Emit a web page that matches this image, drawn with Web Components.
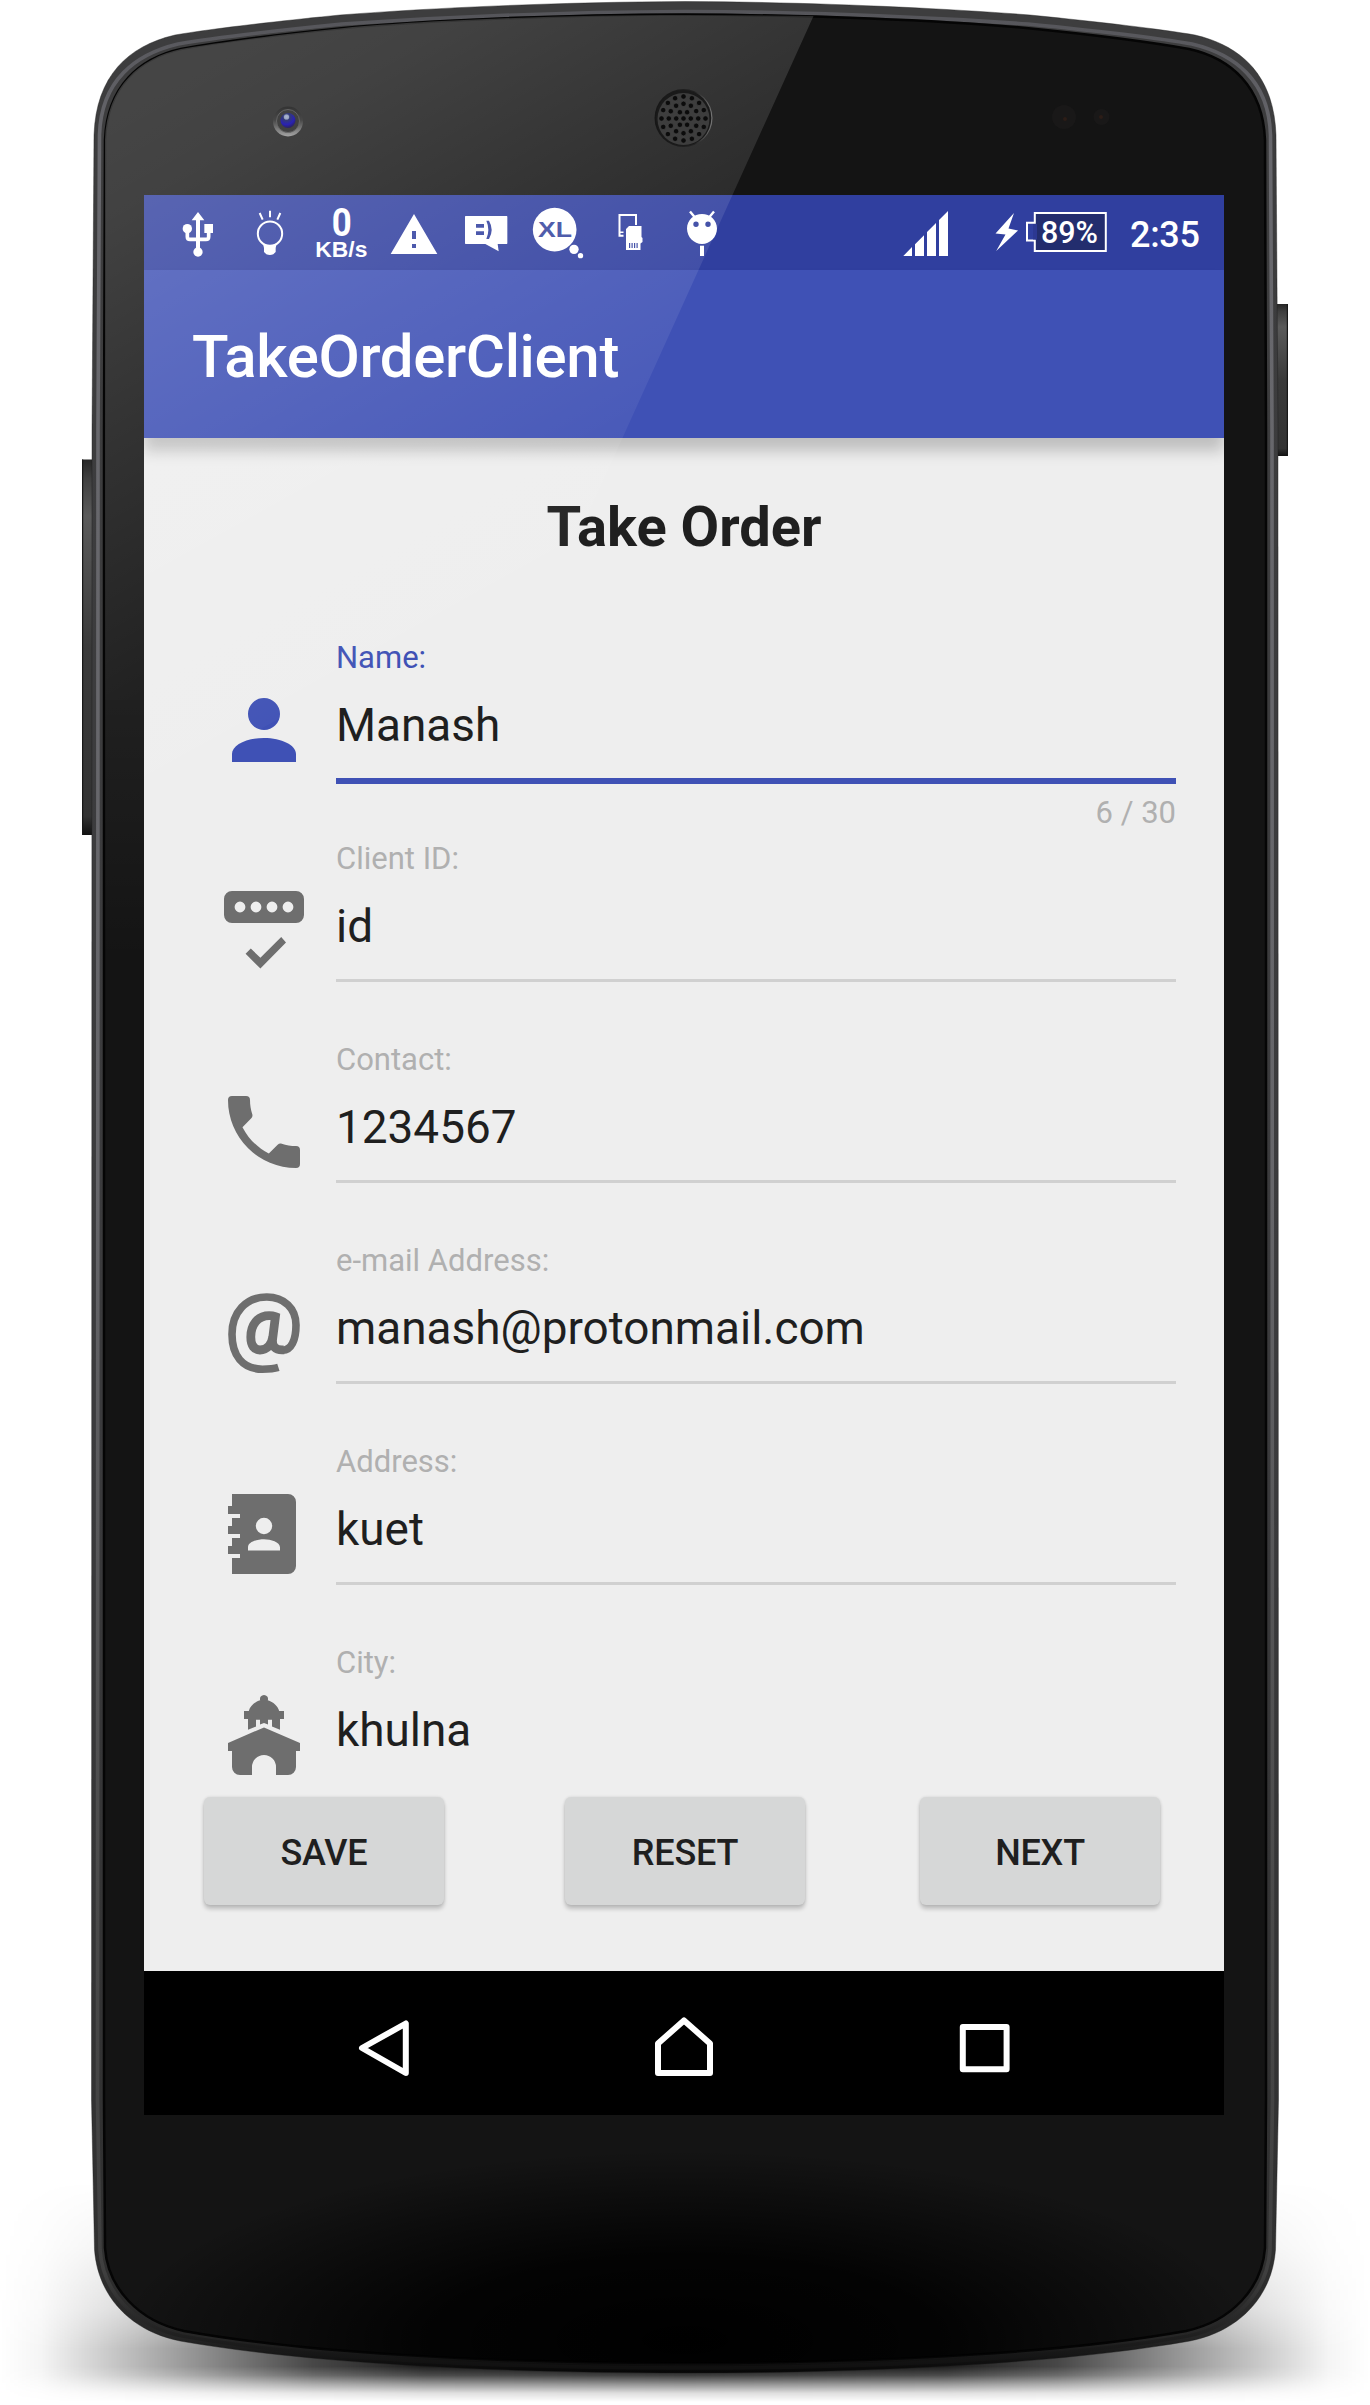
<!DOCTYPE html>
<html lang="en">
<head>
<meta charset="utf-8">
<title>TakeOrderClient</title>
<style>
html,body{margin:0;padding:0;background:#fff}
body{width:1370px;height:2405px;overflow:hidden;font-family:Roboto,"Noto Sans",sans-serif}
</style>
</head>
<body>
<phone-mockup>
  <status-bar></status-bar>
  <app-bar>TakeOrderClient</app-bar>
  <order-form heading="Take Order">
    <form-field icon="person" label="Name:" value="Manash" counter="6 / 30" active></form-field>
    <form-field icon="password" label="Client ID:" value="id"></form-field>
    <form-field icon="phone" label="Contact:" value="1234567"></form-field>
    <form-field icon="at" label="e-mail Address:" value="manash@protonmail.com"></form-field>
    <form-field icon="book" label="Address:" value="kuet"></form-field>
    <form-field icon="city" label="City:" value="khulna"></form-field>
    <raised-button slot="actions">SAVE</raised-button>
    <raised-button slot="actions" style="margin-left:121px">RESET</raised-button>
    <raised-button slot="actions" style="margin-left:115px">NEXT</raised-button>
  </order-form>
  <nav-bar></nav-bar>
</phone-mockup>
<script>
const define = (name, html) => customElements.define(name, class extends HTMLElement {
  constructor() {
    super();
    this.attachShadow({ mode: 'open' });
  }
  connectedCallback() {
    this.shadowRoot.innerHTML = typeof html === 'function' ? html(this) : html;
  }
});

/* Earpiece: concentric rings of holes */
const holes = [[1, 0], [6, 7.3], [12, 14.7], [16, 22]].map(([n, r]) =>
  Array.from({ length: n }, (_, i) => {
    const a = i * 2 * Math.PI / n;
    return `<circle cx="${(683.5 + r * Math.cos(a)).toFixed(1)}" cy="${(118.5 + r * Math.sin(a)).toFixed(1)}" r="2.7"/>`;
  }).join('')).join('');

const outer = 'M685 1.5C560 2 430 8 340 15C270 22 210 29 175 35C128 46 96 76 94 135L92 430L91.5 2100L94.5 2250C98 2296 130 2331 180 2341C300 2362 480 2373 685 2373C890 2373 1070 2362 1190 2341C1240 2331 1272 2296 1275.5 2250L1278.500 2100L1278 430L1276 135C1274 76 1242 46 1195 35C1160 29 1100 22 1030 15C940 8 810 2 685 1.500Z';
const ridge = 'M685 11.500C560 12 430 18 342 24C272 31 212 38 178 44C136 54 101 80 99.500 135L98 430L97.500 2100L100 2250C103 2292 134 2326 182 2336C300 2357 480 2368 685 2368C890 2368 1070 2357 1188 2336C1236 2326 1267 2292 1270 2250L1272.500 2100L1272 430L1270.500 135C1269 80 1234 54 1192 44C1158 38 1098 31 1028 24C940 18 810 12 685 11.500Z';
const face = 'M685 14.500C560 15 430 20 344 28C274 35 214 43 181 49C140 58 107 86 105 140L104 430L104 2100L105 2248C108 2288 138 2321 184 2331C300 2352 480 2363 685 2363C890 2363 1070 2352 1186 2331C1232 2321 1262 2288 1265 2248L1266 2100L1266 430L1265 140C1263 86 1230 58 1189 49C1156 43 1096 35 1026 28C940 20 810 15 685 14.500Z';

define('phone-mockup', `
<style>
:host{display:grid;width:1370px;height:2405px}
svg,.screen{grid-area:1/1}
.screen{display:flex;flex-direction:column;width:1080px;height:1920px;margin:195px 0 0 144px;overflow:hidden;z-index:1}
.sheen{z-index:2;pointer-events:none}
</style>
<svg width="1370" height="2405" viewBox="0 0 1370 2405">
  <defs>
    <linearGradient id="sh"><stop offset="0" stop-opacity="0"/><stop offset=".03" stop-opacity=".04"/><stop offset=".065" stop-opacity=".16"/><stop offset=".13" stop-opacity=".38"/><stop offset=".228" stop-opacity=".72"/><stop offset=".31" stop-opacity=".88"/><stop offset=".5" stop-opacity=".95"/><stop offset=".69" stop-opacity=".88"/><stop offset=".772" stop-opacity=".72"/><stop offset=".87" stop-opacity=".38"/><stop offset=".935" stop-opacity=".16"/><stop offset=".97" stop-opacity=".04"/><stop offset="1" stop-opacity="0"/></linearGradient>
    <linearGradient id="sv" gradientUnits="userSpaceOnUse" x1="0" y1="2180" x2="0" y2="2402"><stop offset="0" stop-color="#fff" stop-opacity="0"/><stop offset=".3" stop-color="#fff" stop-opacity=".2"/><stop offset=".58" stop-color="#fff" stop-opacity=".55"/><stop offset=".76" stop-color="#fff"/><stop offset=".84" stop-color="#fff"/><stop offset=".88" stop-color="#fff" stop-opacity=".8"/><stop offset=".92" stop-color="#fff" stop-opacity=".45"/><stop offset=".96" stop-color="#fff" stop-opacity=".14"/><stop offset="1" stop-color="#fff" stop-opacity="0"/></linearGradient>
    <mask id="sm"><rect y="2180" width="1370" height="222" fill="url(#sv)"/></mask>
    <linearGradient id="rim" x2="0" y2="1"><stop offset="0" stop-color="#3d3d3e"/><stop offset=".6" stop-color="#3b3b3d"/><stop offset=".95" stop-color="#303030"/><stop offset=".985" stop-color="#262626"/><stop offset="1" stop-color="#060606"/></linearGradient>
    <linearGradient id="hl" x2="0" y2="1"><stop offset="0" stop-color="#55555a"/><stop offset=".06" stop-color="#68686d"/><stop offset=".5" stop-color="#66666a"/><stop offset=".8" stop-color="#4a4a4a"/><stop offset=".96" stop-color="#3f3f3f"/><stop offset="1" stop-color="#101010"/></linearGradient>
    <radialGradient id="dk" gradientUnits="userSpaceOnUse" cx="0" cy="0" r="1" gradientTransform="translate(685 2340) scale(570 190)"><stop offset="0" stop-color="#000"/><stop offset=".45" stop-color="#000" stop-opacity=".85"/><stop offset="1" stop-color="#000" stop-opacity="0"/></radialGradient>
    <linearGradient id="bt" x2="0" y2="1"><stop offset="0" stop-color="#262626"/><stop offset=".05" stop-color="#3f3f3f"/><stop offset=".15" stop-color="#5a5a5a"/><stop offset=".35" stop-color="#484848"/><stop offset=".5" stop-color="#3a3a3a"/><stop offset=".95" stop-color="#333"/><stop offset="1" stop-color="#111"/></linearGradient>
  </defs>
  <rect y="2180" width="1370" height="222" fill="url(#sh)" mask="url(#sm)"/>
  <rect x="82" y="459.500" width="12" height="375.500" fill="url(#bt)"/><rect x="82" y="459.500" width="1.200" height="375.500" fill="#181818"/>
  <rect x="1276" y="304" width="12" height="152" fill="url(#bt)"/><rect x="1286.800" y="304" width="1.200" height="152" fill="#181818"/>
  <path d="${outer}" fill="url(#rim)"/>
  <path d="${outer}" fill="none" stroke="#1c1c1c" stroke-opacity=".4"/>
  <path d="${ridge}" fill="none" stroke="url(#hl)" stroke-width="3.600"/>
  <path d="${face}" fill="#141414" stroke="#050505" stroke-width="2.500"/>
  <path d="${face}" fill="url(#dk)"/>
  <circle cx="1064" cy="117" r="12" fill="#191818"/><circle cx="1065" cy="119" r="2" fill="#2c1d17"/>
  <circle cx="1101.500" cy="117" r="8" fill="#191818"/><circle cx="1101" cy="117" r="2" fill="#2c1d17"/>
</svg>
<div class="screen"><slot></slot></div>
<svg class="sheen" width="1370" height="2405" viewBox="0 0 1370 2405">
  <defs>
    <linearGradient id="gl" gradientUnits="userSpaceOnUse" x1="73" y1="131" x2="369" y2="665"><stop offset="0" stop-color="#fff" stop-opacity=".21"/><stop offset=".15" stop-color="#fff" stop-opacity=".195"/><stop offset=".5" stop-color="#fff" stop-opacity=".125"/><stop offset=".87" stop-color="#fff" stop-opacity=".055"/><stop offset="1" stop-color="#fff" stop-opacity=".025"/></linearGradient>
    <linearGradient id="edge" gradientUnits="userSpaceOnUse" x1="0" y1="700" x2="0" y2="960"><stop offset="0" stop-color="#fff" stop-opacity=".052"/><stop offset="1" stop-color="#fff" stop-opacity="0"/></linearGradient>
    <linearGradient id="cam" x2="0" y2="1"><stop offset="0" stop-color="#333"/><stop offset=".45" stop-color="#484848"/><stop offset="1" stop-color="#a5a5a5"/></linearGradient>
    <linearGradient id="sp"><stop offset="0" stop-color="#161616"/><stop offset=".7" stop-color="#222"/><stop offset="1" stop-color="#777"/></linearGradient>
    <radialGradient id="lens" cx=".4" cy=".25" r=".8"><stop offset="0" stop-color="#8a9ac0"/><stop offset=".3" stop-color="#333a78"/><stop offset=".65" stop-color="#2a22b4"/><stop offset="1" stop-color="#2b2350"/></radialGradient>
  </defs>
  <path d="M144 700H105V140C107 86 140 58 181 49C214 43 274 35 344 28C430 20 560 15 685 15L813.500 16L574 545Q566 562 540 574Q500 595 457 620L190 768L144 793Z" fill="url(#gl)"/>
  <path d="M105 700H144V960H105Z" fill="url(#edge)"/>
  <circle cx="288" cy="121.500" r="15" fill="url(#cam)"/><circle cx="288" cy="121" r="11.500" fill="#414141" stroke="#6d6d6d" stroke-width=".8"/><circle cx="288" cy="120.500" r="7.500" fill="url(#lens)"/>
  <circle cx="286.500" cy="117" r="2.600" fill="#b9c3d6" fill-opacity=".7"/>
  <circle cx="683.500" cy="118" r="29" fill="url(#sp)"/><circle cx="683.500" cy="118" r="27.800" fill="#1a1a1a"/><circle cx="683.500" cy="119" r="26" fill="#3d3d3d"/>
  <g fill="#0b0b0b" stroke="#4d4d4d" stroke-width=".6">${holes}</g>
</svg>`);

define('status-bar', `
<style>
:host{display:flex;align-items:center;height:75px;flex:none;background:#303f9f;padding-left:18px;color:#fff}
svg{display:block;flex:none;fill:#fff;overflow:visible}
.space{flex:1}
.time{font-size:36px;line-height:44px;font-weight:500;width:70px;margin:5px 24px 0 22px;letter-spacing:-.3px;white-space:nowrap}
</style>
<svg width="72" height="75" viewBox="66 15 216 225"><path d="M174 66L193 91H180V176H168V91H155Z"/><circle cx="174" cy="186" r="14"/><circle cx="142" cy="116" r="14"/><path d="M193 102H219V129H193Z"/><path d="M142 118V140Q142 148 150 148H198Q206 148 206 140V122" fill="none" stroke="#fff" stroke-width="11"/></svg>
<svg width="72" height="75" viewBox="282 15 216 225"><circle cx="390" cy="131" r="36.500" fill="none" stroke="#fff" stroke-width="6"/><path d="M366 158Q390 174 413 158Q407 166 407 174V186L400 193Q390 197 379 193L372 186V174Q372 166 366 158Z"/><path d="M390 62V82M359 69L368 89M421 69L412 89" fill="none" stroke="#fff" stroke-width="6"/></svg>
<svg width="72" height="75" viewBox="498 15 216 225"><text x="575" y="138" font-family="Roboto" font-weight="700" font-size="118" textLength="60" lengthAdjust="spacingAndGlyphs">0</text><text x="526" y="202" font-family="Liberation Sans" font-weight="700" font-size="65" textLength="156" lengthAdjust="spacingAndGlyphs">KB/s</text></svg>
<svg width="72" height="75" viewBox="714 15 216 225"><path fill-rule="evenodd" d="M822 72L892 192H752ZM816 123V147H828V123ZM816 162V174H828V162Z"/></svg>
<svg width="72" height="75" viewBox="930 15 216 225"><path fill-rule="evenodd" d="M977 78H1100Q1102 78 1102 80V160Q1102 162 1100 162H1073L1076 184L1036 162H977Q975 162 975 160V80Q975 78 977 78ZM1008 102V113H1032V102ZM1008 124V135H1032V124ZM1039 92Q1051 119 1039 147H1047Q1063 119 1047 92Z"/></svg>
<svg width="72" height="75" viewBox="1146 15 216 225"><circle cx="1244" cy="119" r="65.500"/><circle cx="1302" cy="178" r="14"/><circle cx="1321.500" cy="197" r="8"/><text x="1194" y="142" fill="#3847a0" font-family="Liberation Sans" font-weight="700" font-size="67" textLength="102" lengthAdjust="spacingAndGlyphs">XL</text></svg>
<svg width="72" height="75" viewBox="594 195 72 75"><path d="M623.500 235.700H619.500V215H636V225" fill="none" stroke="#fff" stroke-width="2"/><path d="M619 231.500H623.500V233H619Z"/><path fill-rule="evenodd" d="M629 226H641.500V237L642.500 238V242L640.500 243.500V250H626V229ZM629 243V248H630.200V243ZM631.500 243V248H632.700V243ZM634 243V248H635.200V243ZM636.500 243V248H637.700V243Z"/></svg>
<svg width="72" height="75" viewBox="666 195 72 75"><path fill-rule="evenodd" d="M702 214C710 214 717 220 717 228.500C717 237 710 244 702 244C694 244 687 237 687 228.500C687 220 694 214 702 214ZM698.700 224.300A2.700 2.700 0 1 0 693.300 224.300A2.700 2.700 0 1 0 698.700 224.300ZM710.700 224.300A2.700 2.700 0 1 0 705.300 224.300A2.700 2.700 0 1 0 710.700 224.300Z"/><path d="M700 245.700H704V256H700Z"/><path d="M690 211.500L695 217.500M714 211.500L709 217.500" stroke="#fff" stroke-width="2.400"/></svg>
<div class="space"></div>
<svg width="46" height="75" viewBox="903 195 46 75"><path d="M903.300 256L912 247V256ZM915 256V244.300L924 235.200V256ZM927 256V232L936 223V256ZM939 256V220L948 211V256Z"/></svg>
<svg style="margin-left:46px" width="113" height="75" viewBox="995 195 113 75"><path d="M1014 213L995.500 233.500L1005.500 234.500L996.200 251L1018 230.500L1008.500 228.500Z"/><path d="M1035 213H1106V251.300H1035Z" fill="#232d6e"/><path d="M1035 213H1105.800V251H1034.800V240.600H1027V222.800H1034.800V213Z" fill="none" stroke="#fff" stroke-width="2"/><path d="M1033 224H1037V239.500H1033Z" fill="#2c3892"/><text x="1041" y="242.500" font-family="Roboto" font-weight="500" font-size="31" textLength="57" lengthAdjust="spacingAndGlyphs">89%</text></svg>
<div class="time">2:35</div>`);

define('app-bar', `
<style>
:host{display:flex;align-items:center;flex:none;height:168px;box-sizing:border-box;background:#3f51b5;color:#fff;padding:5px 0 0 48px;font-size:60px;letter-spacing:-.35px;font-weight:500;line-height:70px;box-shadow:0 13px 14px rgba(0,0,0,.2);z-index:2}
</style><span><slot></slot></span>`);

define('order-form', el => `
<style>
:host{display:flex;flex-direction:column;height:1533px;flex:none;background:#eee;color:#1f1f1f}
.scroll{display:flow-root;height:1342px;overflow:hidden;flex:none}
h1{margin:55px 0 75px;font-size:56px;line-height:68px;font-weight:700;text-align:center}
.actions{display:flex;padding:17px 0 0 60px}
</style>
<div class="scroll"><h1>${el.getAttribute('heading')}</h1><slot></slot></div>
<div class="actions"><slot name="actions"></slot></div>`);

const icons = {
  person: '<path d="M12,4A4,4 0 0,1 16,8A4,4 0 0,1 12,12A4,4 0 0,1 8,8A4,4 0 0,1 12,4M12,14C16.42,14 20,15.79 20,18V20H4V18C4,15.79 7.58,14 12,14Z"/>',
  password: '<path fill-rule="evenodd" d="M4 2H20A2 2 0 0 1 22 4V8A2 2 0 0 1 20 10H4A2 2 0 0 1 2 8V4A2 2 0 0 1 4 2ZM7.350 6A1.350 1.350 0 1 0 4.650 6A1.350 1.350 0 1 0 7.350 6ZM11.350 6A1.350 1.350 0 1 0 8.650 6A1.350 1.350 0 1 0 11.350 6ZM15.350 6A1.350 1.350 0 1 0 12.650 6A1.350 1.350 0 1 0 15.350 6ZM19.350 6A1.350 1.350 0 1 0 16.650 6A1.350 1.350 0 1 0 19.350 6Z"/><path d="M7.400 17.700L8.700 16.400L11.100 18.700L16.300 13.500L17.500 14.900L11.100 21.400Z"/>',
  phone: '<path d="M6.62,10.79C8.06,13.62 10.38,15.94 13.21,17.38L15.41,15.18C15.69,14.9 16.08,14.82 16.43,14.93C17.55,15.3 18.75,15.5 20,15.5A1,1 0 0,1 21,16.5V20A1,1 0 0,1 20,21A17,17 0 0,1 3,4A1,1 0 0,1 4,3H7.5A1,1 0 0,1 8.5,4C8.5,5.25 8.7,6.45 9.07,7.57C9.18,7.92 9.1,8.31 8.82,8.59L6.62,10.79Z"/>',
  at: '<g fill="none" stroke="currentColor"><path stroke-width="1.900" d="M15.600 20.600C14.500 20.950 13 21.050 11.600 21.050C6.600 21 4 17.600 4 12.300C4 6.800 7.500 3 12.700 3C17 3 20 5.800 20 10C20 13.800 18.800 16.300 16.700 16.300"/><path stroke-width="2.200" d="M17 16.200C14.700 16.400 13.950 15.200 14.150 13.500L14.850 7.900C14.300 7.700 13.800 7.650 13.300 7.650C10.400 7.650 8.700 10 8.700 13C8.700 15.200 9.600 16.250 11 16.250C12.800 16.250 13.900 14.900 14.200 13"/></g>',
  book: '<path fill-rule="evenodd" d="M4 2H18A2 2 0 0 1 20 4V20A2 2 0 0 1 18 22H4V18H6V17H3V15H4V13H6V12H3V10H4V8H6V7H3V5H4ZM14.050 10A2.050 2.050 0 1 0 9.950 10A2.050 2.050 0 1 0 14.050 10ZM8 16.100H16V15.300C16 14 13.700 13.300 12 13.300C10.300 13.300 8 14 8 15.300Z"/>',
  city: '<path d="M7 6H8.200C8.500 4.800 9.700 3.700 11.050 3.300A1 1 0 1 1 12.950 3.300C14.300 3.700 15.500 4.800 15.800 6H17V8H16V10.700L14 9.900V8.200H13V9.400L12 9L11 9.400V8.200H10V9.900L8 10.700V8H7ZM15 22V20A3 3 0 0 0 9 20V22H6A2 2 0 0 1 4 20V16H3V14L12 10.100L21 14V16H20V20A2 2 0 0 1 18 22Z"/>'
};

define('form-field', el => `
<style>
:host{display:grid;grid-template-columns:96px 840px;column-gap:24px;height:201px;padding-left:72px;box-sizing:border-box;color:#6e6e6e;--line:#d0d0d0;--label:#b0b0b0}
:host([active]){color:#3f51b5;--line:#3f51b5;--label:#3f51b5}
svg{display:block;margin-top:46px;fill:currentColor}
.field{display:flex;flex-direction:column;padding-top:1px}
.label,.count{font-size:31px;line-height:42px;color:var(--label)}
.value{margin-top:16px;font-size:45.900px;line-height:60px;color:#1f1f1f}
.line{margin-top:23px;height:3px;background:var(--line)}
:host([active]) .line{height:6px}
.count{align-self:flex-end;margin-top:8px;color:#b0b0b0}
</style>
<svg width="96" height="96" viewBox="0 0 24 24">${icons[el.getAttribute('icon')]}</svg>
<div class="field"><span class="label">${el.getAttribute('label')}</span><span class="value">${el.getAttribute('value')}</span><span class="line"></span>${el.hasAttribute('counter') ? `<span class="count">${el.getAttribute('counter')}</span>` : ''}</div>`);

define('raised-button', `
<style>
:host{display:block;width:240px;height:108px;flex:none}
button{all:unset;box-sizing:border-box;display:flex;align-items:center;justify-content:center;width:100%;height:100%;padding-top:3px;border-radius:6px;background:#d6d7d7;color:#1f1f1f;font-size:36px;letter-spacing:-.2px;font-weight:500;line-height:44px;box-shadow:0 4px 4px rgba(0,0,0,.2),0 0 3px rgba(0,0,0,.12)}
</style><button><slot></slot></button>`);

define('nav-bar', `
<style>
:host{display:flex;align-items:center;height:144px;flex:none;background:#000;padding-left:213px}
svg{display:block;fill:none;stroke:#fff;stroke-width:6;stroke-linejoin:round}
.home,.recent{margin-left:242px}
</style>
<svg width="56" height="144" viewBox="357 1971 56 144"><path d="M362 2048L405.800 2023.500V2073Z"/></svg>
<svg class="home" width="62" height="144" viewBox="655 1971 62 144"><path d="M658 2073V2043.500L684 2020.500L710 2043.500V2073Z"/></svg>
<svg class="recent" width="56" height="144" viewBox="959 1971 56 144"><path d="M962.800 2027H1006.600V2069.300H962.800Z"/></svg>`);
</script>
</body>
</html>
